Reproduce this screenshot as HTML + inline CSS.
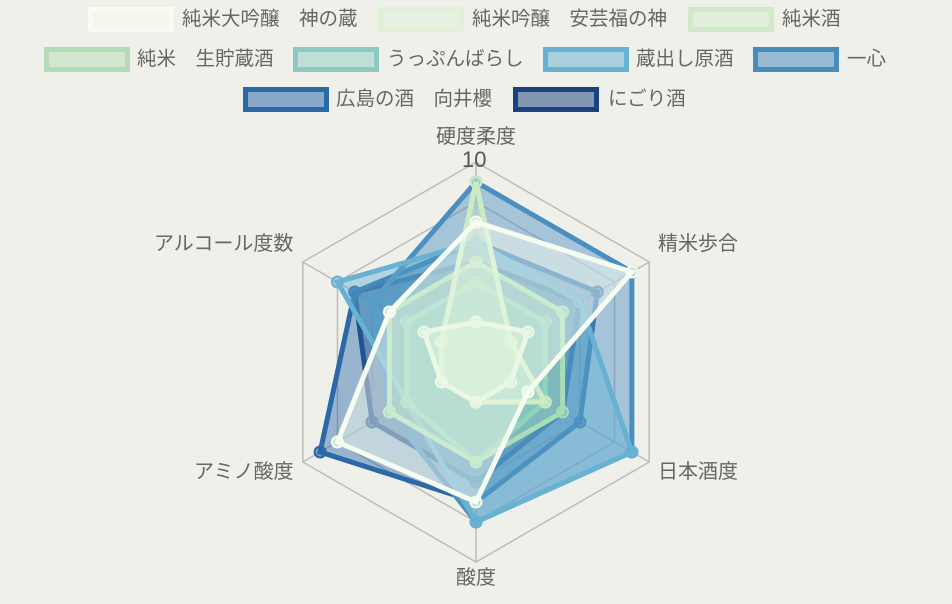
<!DOCTYPE html>
<html><head><meta charset="utf-8">
<style>
body{margin:0;width:952px;height:604px;background:#f0f0eb;overflow:hidden;position:relative;font-family:"Liberation Sans","Noto Sans CJK JP",sans-serif;color:#666;}
.b{position:absolute;width:76px;height:15px;border:5px solid;}
.t{position:absolute;font-size:19.5px;line-height:20px;white-space:nowrap;}
.l{position:absolute;font-size:20px;line-height:22px;white-space:nowrap;}
svg{position:absolute;left:0;top:0}
</style></head><body>
<div class="b" style="left:88px;top:7px;border-color:#f7fcf0;background:#f4f6ee"></div><div class="t" style="left:182px;top:9px">純米大吟醸　神の蔵</div>
<div class="b" style="left:378px;top:7px;border-color:#e0f1d8;background:#e8f1e2"></div><div class="t" style="left:472px;top:9px">純米吟醸　安芸福の神</div>
<div class="b" style="left:688px;top:7px;border-color:#d1e9c8;background:#e0eedb"></div><div class="t" style="left:782px;top:9px">純米酒</div>
<div class="b" style="left:44px;top:47px;border-color:#b3dbb5;background:#d2e6d0"></div><div class="t" style="left:137px;top:49px">純米　生貯蔵酒</div>
<div class="b" style="left:293px;top:47px;border-color:#8ecac2;background:#bfe0d8"></div><div class="t" style="left:387px;top:49px">うっぷんばらし</div>
<div class="b" style="left:543px;top:47px;border-color:#67b1d3;background:#abd0dd"></div><div class="t" style="left:636px;top:49px">蔵出し原酒</div>
<div class="b" style="left:753px;top:47px;border-color:#468cbd;background:#97bbd2"></div><div class="t" style="left:847px;top:49px">一心</div>
<div class="b" style="left:243px;top:87px;border-color:#2a68a8;background:#87a8c6"></div><div class="t" style="left:336px;top:89px">広島の酒　向井櫻</div>
<div class="b" style="left:513px;top:87px;border-color:#1b427f;background:#8297b3"></div><div class="t" style="left:608px;top:89px">にごり酒</div>
<svg id="s" width="952" height="604"></svg>
<div class="l" style="left:436px;top:126px">硬度柔度</div>
<div class="l" style="left:462px;top:149px;font-size:22px;color:#555">10</div>
<div class="l" style="left:658px;top:233px">精米歩合</div>
<div class="l" style="left:658px;top:461px">日本酒度</div>
<div class="l" style="left:456px;top:567px">酸度</div>
<div class="l" style="left:194px;top:461px">アミノ酸度</div>
<div class="l" style="left:154px;top:233px">アルコール度数</div>
<script>
var s=document.getElementById('s'),cx=476,cy=362,k=20,h='';
function pt(v,i){var a=(-90+60*i)*Math.PI/180;return [cx+v*k*Math.cos(a),cy+v*k*Math.sin(a)];}
for(var r=2;r<=10;r+=2){var p=[];for(var i=0;i<6;i++)p.push(pt(r,i).join(','));h+='<polygon points="'+p.join(' ')+'" fill="none" stroke="#bbb" stroke-width="1.5"/>';}
for(var i=0;i<6;i++){var q=pt(10,i);h+='<line x1="'+cx+'" y1="'+cy+'" x2="'+q[0]+'" y2="'+q[1]+'" stroke="#bbb" stroke-width="1.5"/>';}
var D=[
['#f7fcf0',[7,9,3,7,8,5]],
['#e0f3db',[2,3,2,2,2,3]],
['#ccebc5',[9,2,4,2,2,2]],
['#a8ddb5',[5,5,5,5,5,5]],
['#7bccc4',[4,4,4,5,4,4]],
['#67b1d3',[6,6,9,8,4,8]],
['#4a8fbf',[9,9,9,8,5,6]],
['#2a68a8',[6,7,6,7,9,7]],
['#1b427f',[5,6,5,6,6,7]]];
for(var d=D.length-1;d>=0;d--){var c=D[d][0],v=D[d][1],p=[];for(var i=0;i<6;i++)p.push(pt(v[i],i).join(','));
h+='<polygon points="'+p.join(' ')+'" fill="'+c+'" fill-opacity="0.45" stroke="'+c+'" stroke-width="5" stroke-linejoin="miter"/>';
for(var i=0;i<6;i++){var q=pt(v[i],i);h+='<circle cx="'+q[0]+'" cy="'+q[1]+'" r="5.5" fill="'+c+'" fill-opacity="0.6" stroke="'+c+'" stroke-width="2"/>';}}
s.innerHTML=h;
</script>
</body></html>
